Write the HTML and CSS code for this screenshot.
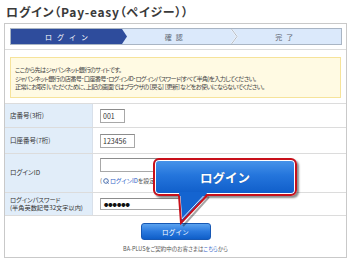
FILE: index.html
```html
<!DOCTYPE html>
<html lang="ja">
<head>
<meta charset="utf-8">
<title>ログイン（Pay-easy（ペイジー））</title>
<link rel="stylesheet" href="styles.css">
</head>
<body>
<div class="page">
  <h1 class="title">ログイン（Pay-easy（ペイジー））</h1>
  <div class="panel">
    <div class="steps-wrap">
      <div class="steps">
        <div class="step active">ログイン</div>
        <div class="step s2">確認</div>
        <svg class="chev" width="7" height="15" viewBox="0 0 7 15"><polyline points="0.5,0 6,7.5 0.5,15" fill="none" stroke="#fff" stroke-width="1.6"/><polyline points="0.5,0 6,7.5 0.5,15" fill="none" stroke="#9aa6b6" stroke-width="0.8"/></svg>
        <div class="step s3">完了</div>
      </div>
    </div>
    <div class="notice-wrap">
      <div class="notice">
        <p>ここから先はジャパンネット銀行のサイトです。</p>
        <p>ジャパンネット銀行の店番号･口座番号･ログインID･ログインパスワード(すべて半角)を入力してください。</p>
        <p>正常にお取引いただくために、上記の画面ではブラウザの［戻る］［更新］などをお使いにならないでください。</p>
      </div>
    </div>
    <div class="row r1">
      <div class="label">店番号(3桁)</div>
      <div class="value"><div class="input w1">001</div></div>
    </div>
    <div class="row r2">
      <div class="label">口座番号(7桁)</div>
      <div class="value"><div class="input w2">123456</div></div>
    </div>
    <div class="row r3">
      <div class="label">ログインID</div>
      <div class="value v3">
        <div class="input w3"></div>
        <p class="help">(<svg class="hicon" width="6" height="6" viewBox="0 0 6 6"><circle cx="3" cy="3" r="2.3" fill="none" stroke="#4a6fae" stroke-width="1"/><path d="M3.6 3.6 L5.6 5.6" stroke="#4a6fae" stroke-width="1"/></svg><a class="link">ログインID</a>を設定</p>
      </div>
    </div>
    <div class="row r4">
      <div class="label"><span>ログインパスワード<br>(半角英数記号32文字以内)</span></div>
      <div class="value"><div class="input w4 pw">●●●●●●</div></div>
    </div>
    <div class="submit">
      <div class="btn">ログイン</div>
      <p class="note">BA-PLUSをご契約中のお客さまは<a class="link">こちら</a>から</p>
    </div>
  </div>
  <div class="callout">ログイン</div>
  <svg class="tail" width="40" height="36" viewBox="0 0 40 36">
    <polyline points="34,5 8,34" fill="none" stroke="rgba(0,0,0,0.35)" stroke-width="2"/>
    <polygon points="4,0 33,0 6,32" fill="#1464d0"/>
    <polyline points="5,4 6.8,27 28.5,4" fill="none" stroke="#fff" stroke-width="0.9"/>
    <polyline points="4,3.5 6,31 32,3.5" fill="none" stroke="#c8101a" stroke-width="2"/>
  </svg>
</div>
</body>
</html>
```

FILE: styles.css
```css
* { box-sizing: border-box; }

body {
  margin: 0;
  background: #fff;
  font-family: "Noto Sans CJK JP", "Noto Sans", sans-serif;
  color: #333;
}

p { margin: 0; }

.page {
  position: relative;
  width: 350px;
  height: 260px;
  overflow: hidden;
}

.title {
  margin: 0;
  height: 23px;
  padding-left: 6px;
  font-size: 12px;
  font-weight: bold;
  line-height: 23px;
  color: #3a3a3a;
  font-feature-settings: "palt" 1;
  letter-spacing: 0.75px;
}

.panel {
  margin-left: 4px;
  width: 343px;
  height: 235px;
  border: 1px solid #c9c9c9;
}

.steps-wrap {
  padding: 4px 4px 4px 5px;
  border-bottom: 1px solid #dcdcdc;
}

.steps {
  display: flex;
  height: 17px;
  border: 1px solid #a9b5c4;
  background: #dbe9fb;
}

.step {
  display: flex;
  align-items: center;
  justify-content: center;
  font-size: 7px;
  color: #5f6874;
  letter-spacing: 4px;
}

.active {
  width: 116px;
  background: #2e4c9c;
  color: #fff;
  letter-spacing: 5px;
  clip-path: polygon(0 0, calc(100% - 5px) 0, 100% 50%, calc(100% - 5px) 100%, 0 100%);
}

.s2, .s3 {
  flex: 1;
  padding-right: 6px;
}

.chev { display: block; flex: none; }

.notice-wrap {
  padding: 7px 5px 5px 5px;
  border-bottom: 1px solid #dcdcdc;
}

.notice {
  height: 41px;
  border: 1px solid #f6e39a;
  background: #fffae3;
  padding: 8px 4px 0;
  font-size: 6.2px;
  line-height: 8.5px;
  letter-spacing: -0.65px;
  color: #444;
  font-feature-settings: "palt" 1;
  white-space: nowrap;
}

.row {
  display: grid;
  grid-template-columns: 88px 1fr;
  border-bottom: 1px solid #dcdcdc;
}

.r1 { height: 24px; }
.r2 { height: 26px; }
.r3 { height: 39px; }
.r4 { height: 23px; }

.label {
  display: flex;
  align-items: center;
  padding-left: 5px;
  background: #e1edf9;
  border-right: 1px solid #d8e0ea;
  font-size: 6.5px;
  line-height: 7.5px;
  color: #333;
  font-feature-settings: "palt" 1;
  white-space: nowrap;
}

.r4 .label {
  font-size: 6.2px;
  line-height: 8px;
}

.value {
  display: flex;
  align-items: center;
  padding-left: 7px;
}

.v3 {
  flex-direction: column;
  align-items: flex-start;
  justify-content: flex-start;
  padding-top: 4px;
}

.input {
  display: flex;
  align-items: center;
  height: 14px;
  padding-left: 2px;
  border: 1px solid #a8a8a8;
  border-top-color: #8c8c8c;
  background: #fff;
  font-size: 7px;
  color: #333;
}

.w1 { width: 25px; }
.w2 { width: 35px; }
.w3 { width: 90px; }
.w4 { width: 85px; height: 12px; }

.pw {
  font-size: 4.3px;
  color: #111;
  padding-left: 3px;
}

.help {
  display: flex;
  align-items: center;
  margin-top: 5px;
  font-size: 6px;
  line-height: 8px;
  color: #555;
  font-feature-settings: "palt" 1;
  white-space: nowrap;
}

.hicon { display: block; margin: 0 1px 0 1px; }

.link { color: #2f62c8; }

.submit {
  display: flex;
  flex-direction: column;
  align-items: center;
  padding-top: 7px;
}

.btn {
  display: flex;
  align-items: center;
  justify-content: center;
  width: 70px;
  height: 17px;
  border: 1px solid #1758b4;
  border-radius: 3px;
  background: linear-gradient(#5ba2ef, #2a79de 50%, #0f5ec8);
  color: #fff;
  font-size: 6.5px;
  letter-spacing: 0.3px;
}

.note {
  margin-top: 5px;
  font-size: 5.5px;
  line-height: 8px;
  color: #555;
  font-feature-settings: "palt" 1;
}

.callout {
  position: absolute;
  left: 153px;
  top: 158px;
  width: 144px;
  height: 38px;
  display: flex;
  align-items: center;
  justify-content: center;
  border: 2px solid #c8101a;
  border-radius: 6px;
  background: linear-gradient(#4895ea, #2475dc 45%, #0f5dc9);
  box-shadow: inset 0 0 0 1px #fff, 2px 2px 2px rgba(0, 0, 0, 0.45);
  color: #fff;
  font-size: 12.5px;
  font-weight: bold;
  text-shadow: 0 0 1px rgba(0, 0, 0, 0.3);
}

.tail {
  position: absolute;
  left: 175px;
  top: 192px;
}
```
